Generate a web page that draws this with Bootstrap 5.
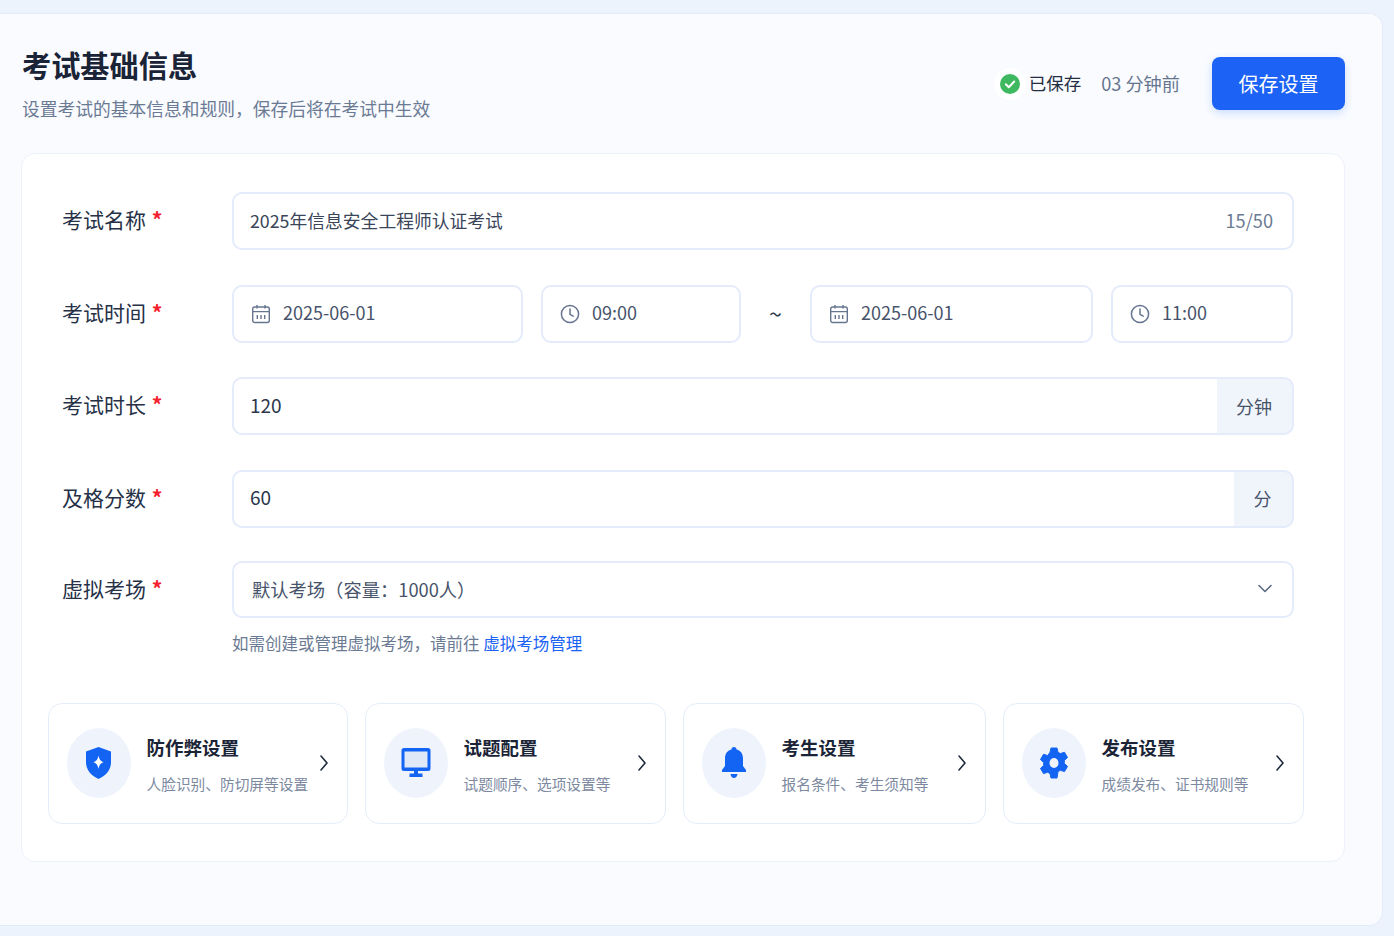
<!DOCTYPE html>
<html lang="zh-CN">
<head>
    <meta charset="UTF-8">
    <meta name="viewport" content="width=device-width, initial-scale=1.0">
    <title>考试基础信息</title>
    <link href="https://cdn.jsdelivr.net/npm/bootstrap@5.3.0/dist/css/bootstrap.min.css" rel="stylesheet">
    <style>
        html, body {
            height: 100%;
        }
        body {
            background-color: #edf3fd;
            font-family: "Noto Sans CJK SC", "Noto Sans", sans-serif;
            color: #1f2a3d;
            overflow: hidden;
        }
        .exam-panel {
            width: 1383px;
            height: 913px;
            margin-top: 13px;
            padding: 30px 37px 0 21px;
            background-color: #f9fbff;
            border: 1px solid #e3ebf9;
            border-left: 0;
            border-radius: 0 14px 14px 0;
        }
        .panel-title {
            font-size: 29.2px;
            line-height: 40px;
            font-weight: 700;
            color: #1a2436;
            margin: 0 0 9px 1px;
        }
        .panel-sub {
            font-size: 17.75px;
            line-height: 30px;
            color: #6b7a93;
            margin: 0 0 0 1px;
        }
        .saved-icon {
            border-radius: 50%;
            background-color: #fff;
            box-shadow: 0 0 0 5px #fff;
        }
        .saved-text {
            font-size: 17.5px;
            color: #232e42;
        }
        .saved-ago {
            font-size: 18.2px;
            color: #66758f;
            margin: 0 32px 0 20px;
        }
        .btn-save {
            width: 133px;
            height: 53px;
            font-size: 20px;
            color: #fff;
            background-color: #1b62f5;
            border: 0;
            border-radius: 8px;
            box-shadow: 0 3px 8px rgba(27, 98, 245, .2);
        }
        .form-shell {
            margin-top: 30px;
            padding: 38px 40px 37px 26px;
            background-color: #fff;
            border: 1px solid #ecf1fb;
            border-radius: 14px;
        }
        .form-block {
            padding: 0 10px 0 14px;
        }
        .form-line {
            display: grid;
            grid-template-columns: 170px 1fr;
            align-items: center;
            margin-bottom: 34.6px;
        }
        .form-line-tight {
            margin-bottom: 33px;
        }
        .line-label {
            font-size: 21px;
            margin: -2px 0 0;
            color: #263147;
        }
        .line-label i {
            font-style: normal;
            font-weight: 700;
            color: #f5222d;
            margin-left: 1px;
        }
        .exam-panel .form-control,
        .exam-panel .form-select,
        .exam-panel .input-group-text {
            height: 58px;
            font-size: 19px;
            color: #2b364b;
            border: 2px solid #e4ebfa;
            border-radius: 10px;
        }
        .exam-panel .form-control {
            padding-left: 16px;
            padding-bottom: 8px;
        }
        .exam-panel .name-input {
            font-size: 17.8px;
            color: #3a4559;
        }
        .exam-panel .input-group .form-control {
            border-right: 0;
            padding-bottom: 10px;
        }
        .exam-panel .input-group-text {
            background-color: #f0f4fb;
            border-left: 0;
            justify-content: center;
            font-size: 18px;
            color: #47536a;
        }
        .unit-wide {
            width: 78px;
        }
        .unit-narrow {
            width: 61px;
        }
        .count-hint {
            position: absolute;
            right: 21px;
            top: 50%;
            transform: translateY(-50%);
            font-size: 18.2px;
            color: #6b7a93;
            z-index: 5;
        }
        .time-box {
            color: #47536a !important;
            gap: 12px;
            padding-left: 17px !important;
            font-size: 18px !important;
        }
        .time-box svg {
            flex: none;
            margin-top: 2px;
        }
        .w-date-a { width: 291px; }
        .w-clock-a { width: 200px; margin-left: 18px; }
        .w-date-b { width: 283px; }
        .w-clock-b { width: 182px; margin-left: 18px; }
        .time-tilde {
            width: 69px;
            text-align: center;
            font-size: 23px;
            line-height: 1;
            color: #2b364b;
        }
        .exam-panel .form-select {
            height: 57px;
            padding-left: 18px;
            font-size: 18.3px;
            color: #47536a;
            background-image: none;
        }
        .select-wrap svg {
            position: absolute;
            right: 21px;
            top: 22px;
            pointer-events: none;
        }
        .form-note {
            margin: 13px 0 0 170px;
            font-size: 16.5px;
            line-height: 24px;
            color: #6b7a93;
        }
        .form-note a {
            color: #1b62f5;
            text-decoration: none;
        }
        .feature-row {
            gap: 17px;
            margin-top: 48px;
        }
        .feature-tile {
            flex: none;
            width: 301px;
            height: 121px;
            padding: 0 18px 0 17.5px;
            background-color: #fff;
            border: 1.5px solid #e6edfa;
            border-radius: 14px;
        }
        .tile-narrow {
            width: 300px;
        }
        .tile-wide {
            width: 303px;
        }
        .feature-icon {
            flex: none;
            width: 64px;
            height: 70px;
            border-radius: 50%;
            background-color: #eef3fc;
            margin-right: 16px;
        }
        .feature-text {
            margin-top: 3px;
        }
        .feature-name {
            font-size: 18.5px;
            line-height: 26px;
            font-weight: 700;
            color: #1a2436;
            margin-bottom: 13px;
        }
        .feature-desc {
            font-size: 14.7px;
            line-height: 22px;
            color: #7c899f;
            white-space: nowrap;
        }
    </style>
</head>
<body>
    <div class="exam-panel">
        <div class="d-flex justify-content-between align-items-center">
            <div>
                <h1 class="panel-title">考试基础信息</h1>
                <p class="panel-sub">设置考试的基本信息和规则，保存后将在考试中生效</p>
            </div>
            <div class="d-flex align-items-center">
                <svg width="22" height="22" viewBox="0 0 22 22" class="me-2 saved-icon">
                    <circle cx="11" cy="11" r="10" fill="#3fb95f"/>
                    <path d="M6.8 11.3l3 2.9 5.4-5.7" fill="none" stroke="#fff" stroke-width="2" stroke-linecap="round" stroke-linejoin="round"/>
                </svg>
                <span class="saved-text">已保存</span>
                <span class="saved-ago">03 分钟前</span>
                <button type="button" class="btn btn-save">保存设置</button>
            </div>
        </div>

        <div class="form-shell">
            <form class="form-block">
                <div class="form-line">
                    <label class="line-label">考试名称 <i>*</i></label>
                    <div class="position-relative">
                        <input type="text" class="form-control name-input" value="2025年信息安全工程师认证考试">
                        <span class="count-hint">15/50</span>
                    </div>
                </div>

                <div class="form-line">
                    <label class="line-label">考试时间 <i>*</i></label>
                    <div class="d-flex align-items-center">
                        <div class="form-control time-box d-flex align-items-center w-date-a">
                            <svg width="20" height="20" viewBox="0 0 20 20" fill="none" stroke="#66758f" stroke-width="1.4"><rect x="1.7" y="3" width="16.6" height="15.5" rx="2"/><path d="M1.7 7.6h16.6M6 1v3.6M14 1v3.6M6.3 11v4M10 11v4M13.7 11v4"/></svg>
                            <span>2025-06-01</span>
                        </div>
                        <div class="form-control time-box d-flex align-items-center w-clock-a">
                            <svg width="20" height="20" viewBox="0 0 20 20" fill="none" stroke="#66758f" stroke-width="1.5" stroke-linecap="round" stroke-linejoin="round"><circle cx="10" cy="10" r="8.6"/><path d="M10 5v5.4l3.2 1.8"/></svg>
                            <span>09:00</span>
                        </div>
                        <span class="time-tilde">~</span>
                        <div class="form-control time-box d-flex align-items-center w-date-b">
                            <svg width="20" height="20" viewBox="0 0 20 20" fill="none" stroke="#66758f" stroke-width="1.4"><rect x="1.7" y="3" width="16.6" height="15.5" rx="2"/><path d="M1.7 7.6h16.6M6 1v3.6M14 1v3.6M6.3 11v4M10 11v4M13.7 11v4"/></svg>
                            <span>2025-06-01</span>
                        </div>
                        <div class="form-control time-box d-flex align-items-center w-clock-b">
                            <svg width="20" height="20" viewBox="0 0 20 20" fill="none" stroke="#66758f" stroke-width="1.5" stroke-linecap="round" stroke-linejoin="round"><circle cx="10" cy="10" r="8.6"/><path d="M10 5v5.4l3.2 1.8"/></svg>
                            <span>11:00</span>
                        </div>
                    </div>
                </div>

                <div class="form-line">
                    <label class="line-label">考试时长 <i>*</i></label>
                    <div class="input-group">
                        <input type="text" class="form-control" value="120">
                        <span class="input-group-text unit-wide">分钟</span>
                    </div>
                </div>

                <div class="form-line form-line-tight">
                    <label class="line-label">及格分数 <i>*</i></label>
                    <div class="input-group">
                        <input type="text" class="form-control" value="60">
                        <span class="input-group-text unit-narrow">分</span>
                    </div>
                </div>

                <div class="form-line mb-0">
                    <label class="line-label">虚拟考场 <i>*</i></label>
                    <div class="position-relative select-wrap">
                        <select class="form-select">
                            <option>默认考场（容量：1000人）</option>
                        </select>
                        <svg width="16" height="12" viewBox="0 0 16 12" fill="none" stroke="#5c6980" stroke-width="1.6" stroke-linecap="round" stroke-linejoin="round"><path d="M2 2.500l6 6 6-6"/></svg>
                    </div>
                </div>
                <p class="form-note">如需创建或管理虚拟考场，请前往 <a href="#">虚拟考场管理</a></p>
            </form>

            <div class="d-flex feature-row">
                <div class="feature-tile tile-narrow d-flex align-items-center">
                    <div class="feature-icon d-flex align-items-center justify-content-center">
                        <svg width="27" height="34" viewBox="0 0 27 34"><path d="M13.500 1L26 5.500V16c0 8-5 13.500-12.500 17C6 29.500 1 24 1 16V5.500z" fill="#1464f4"/><path d="M13.500 9.500c.7 3.900 2 5.600 5 6.700-3 1.100-4.300 2.800-5 6.800-.7-4-2-5.700-5-6.800 3-1.100 4.300-2.800 5-6.700z" fill="#fff"/></svg>
                    </div>
                    <div class="flex-grow-1 feature-text">
                        <div class="feature-name">防作弊设置</div>
                        <div class="feature-desc">人脸识别、防切屏等设置</div>
                    </div>
                    <svg width="10" height="18" viewBox="0 0 10 18" fill="none" stroke="#1f2a3d" stroke-width="1.6" stroke-linecap="round" stroke-linejoin="round"><path d="M2 2l6 7-6 7"/></svg>
                </div>
                <div class="feature-tile d-flex align-items-center">
                    <div class="feature-icon d-flex align-items-center justify-content-center">
                        <svg width="30" height="30" viewBox="0 0 30 30"><path d="M3 0h24a2.500 2.500 0 0 1 2.500 2.500v18A2.500 2.500 0 0 1 27 23H3A2.500 2.500 0 0 1 .5 20.500v-18A2.500 2.500 0 0 1 3 0z" fill="#1464f4"/><path d="M3.500 3.500h23v16h-23z" fill="#dfe8f7"/><path d="M13 23h4v2.500h4.500V29h-13v-3.500H13z" fill="#1464f4"/></svg>
                    </div>
                    <div class="flex-grow-1 feature-text">
                        <div class="feature-name">试题配置</div>
                        <div class="feature-desc">试题顺序、选项设置等</div>
                    </div>
                    <svg width="10" height="18" viewBox="0 0 10 18" fill="none" stroke="#1f2a3d" stroke-width="1.6" stroke-linecap="round" stroke-linejoin="round"><path d="M2 2l6 7-6 7"/></svg>
                </div>
                <div class="feature-tile tile-wide d-flex align-items-center">
                    <div class="feature-icon d-flex align-items-center justify-content-center">
                        <svg width="26" height="34" viewBox="0 0 26 34"><path d="M13 1c1.500 0 2.500 1 2.600 2.400C20 4.500 22 8 22 12.500V20l3 4v2H1v-2l3-4v-7.500C4 8 6 4.500 10.400 3.400 10.500 2 11.500 1 13 1z" fill="#1464f4"/><path d="M9.500 28h7c-.4 2.500-1.800 4-3.500 4s-3.100-1.500-3.500-4z" fill="#1464f4"/></svg>
                    </div>
                    <div class="flex-grow-1 feature-text">
                        <div class="feature-name">考生设置</div>
                        <div class="feature-desc">报名条件、考生须知等</div>
                    </div>
                    <svg width="10" height="18" viewBox="0 0 10 18" fill="none" stroke="#1f2a3d" stroke-width="1.6" stroke-linecap="round" stroke-linejoin="round"><path d="M2 2l6 7-6 7"/></svg>
                </div>
                <div class="feature-tile d-flex align-items-center">
                    <div class="feature-icon d-flex align-items-center justify-content-center">
                        <svg width="30" height="32" viewBox="0 0 30 32"><path d="M12 1h6l1 4.300 2.300 1.300 4.200-1.300 3 5.200-3.200 3v2.900l3.200 3-3 5.200-4.200-1.300-2.300 1.300L18 31h-6l-1-4.400-2.300-1.300-4.200 1.300-3-5.200 3.200-3v-2.900l-3.200-3 3-5.200 4.200 1.300L11 5.300z" fill="#1464f4" stroke="#1464f4" stroke-linejoin="round"/><ellipse cx="15" cy="16" rx="4.500" ry="5" fill="#eef3fc"/></svg>
                    </div>
                    <div class="flex-grow-1 feature-text">
                        <div class="feature-name">发布设置</div>
                        <div class="feature-desc">成绩发布、证书规则等</div>
                    </div>
                    <svg width="10" height="18" viewBox="0 0 10 18" fill="none" stroke="#1f2a3d" stroke-width="1.6" stroke-linecap="round" stroke-linejoin="round"><path d="M2 2l6 7-6 7"/></svg>
                </div>
            </div>
        </div>
    </div>
    <script src="https://cdn.jsdelivr.net/npm/bootstrap@5.3.0/dist/js/bootstrap.bundle.min.js"></script>
</body>
</html>
